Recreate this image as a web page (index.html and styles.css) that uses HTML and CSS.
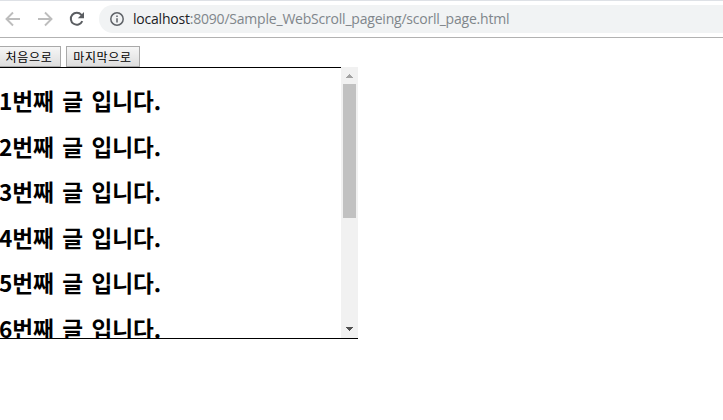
FILE: index.html
```html
<!DOCTYPE html>
<html lang="ko">
<head>
<meta charset="utf-8">
<title>scorll_page</title>
<link rel="stylesheet" href="styles.css">
</head>
<body>
<header class="toolbar">
  <svg class="nav" viewBox="0 0 16 16"><path d="M15 8H2M8 1.5 1.5 8 8 14.5"/></svg>
  <svg class="nav" viewBox="0 0 16 16"><path d="M1 8h13M8 1.5 14.5 8 8 14.5"/></svg>
  <svg class="nav reload" viewBox="0 0 16 16"><path d="M13.3 10.2A6 6 0 1 1 12.4 3.8L14 5.5"/><path class="solid" d="M15 1v6.2H8.8z"/></svg>
  <div class="address">
    <svg class="info" viewBox="0 0 14 14"><circle cx="7" cy="7" r="6.2"/><path d="M7 6.2v4.2M7 3.4v1.5"/></svg>
    <span class="url"><span class="host">localhost</span>:8090/Sample_WebScroll_pageing/scorll_page.html</span>
  </div>
</header>
<main>
  <div class="actions">
    <button class="first">처음으로</button>
    <button class="last">마지막으로</button>
  </div>
  <section class="list">
    <div class="posts">
      <h2>1번째 글 입니다.</h2>
      <h2>2번째 글 입니다.</h2>
      <h2>3번째 글 입니다.</h2>
      <h2>4번째 글 입니다.</h2>
      <h2>5번째 글 입니다.</h2>
      <h2>6번째 글 입니다.</h2>
    </div>
    <div class="scrollbar">
      <svg class="arrow up" viewBox="0 0 17 17"><path d="M8 7h1v1h1v1h1v1h1v1H5v-1h1V9h1V8h1z"/></svg>
      <div class="thumb"></div>
      <svg class="arrow down" viewBox="0 0 17 17"><path d="M5 6h7v1h-1v1h-1v1H9v1H8V9H7V8H6V7H5z"/></svg>
    </div>
  </section>
</main>
</body>
</html>
```
FILE: styles.css
```css
* { box-sizing: border-box; }
body {
  margin: 0;
  height: 420px;
  overflow: hidden;
  background: #fff;
  color: #000;
  font-family: "Noto Sans CJK KR", sans-serif;
}
.toolbar {
  display: flex;
  align-items: center;
  height: 38px;
  padding-left: 5px;
  border-top: 1px solid #dee1e6;
  border-bottom: 1px solid #b2b2b2;
}
.nav {
  width: 16px;
  height: 16px;
  margin-right: 16px;
  fill: none;
  stroke: #bdbdbd;
  stroke-width: 1.9;
}
.reload { margin-right: 14px; stroke: #5a5d61; stroke-width: 2; }
.solid { fill: #5a5d61; stroke: none; }
.address {
  display: flex;
  flex: 1;
  align-items: center;
  height: 28px;
  padding-left: 11px;
  border-radius: 14px 0 0 14px;
  background: #f1f3f4;
}
.info {
  width: 14px;
  height: 14px;
  margin-right: 9px;
  fill: none;
  stroke: #5f6368;
  stroke-width: 1.5;
}
.url {
  color: #80868b;
  font: 14px/20px "Open Sans", sans-serif;
  letter-spacing: -0.21px;
  white-space: nowrap;
}
.host { color: #202124; }
.actions {
  display: flex;
  gap: 5px;
  height: 29px;
  padding-top: 8px;
}
button {
  height: 21px;
  padding: 0;
  border: 1px solid #a9a9a9;
  background: linear-gradient(#f6f6f6, #dedede);
  color: #000;
  font: 12px/18px "Noto Sans CJK KR", sans-serif;
  letter-spacing: 0.7px;
  white-space: nowrap;
}
.first { width: 61px; padding-right: 2px; border-left: 0; }
.last { width: 74px; padding-right: 1px; }
.list {
  display: flex;
  width: 358px;
  height: 272px;
  border-bottom: 1px solid #000;
}
.posts {
  width: 341px;
  overflow: hidden;
  border-top: 1px solid #000;
  padding-top: 17px;
}
h2 {
  height: 32px;
  margin: 0 0 13.6px;
  font-size: 22.6px;
  font-weight: 700;
  line-height: 32px;
  word-spacing: 2.2px;
  letter-spacing: -0.05px;
  text-indent: -1px;
  white-space: nowrap;
}
.scrollbar {
  display: flex;
  flex-direction: column;
  width: 17px;
  background: #f1f1f1;
}
.arrow { width: 17px; height: 17px; }
.up { fill: #a3a3a3; }
.down { margin-top: auto; fill: #505050; }
.thumb { height: 134px; margin: 0 2px; background: #c1c1c1; }
```
